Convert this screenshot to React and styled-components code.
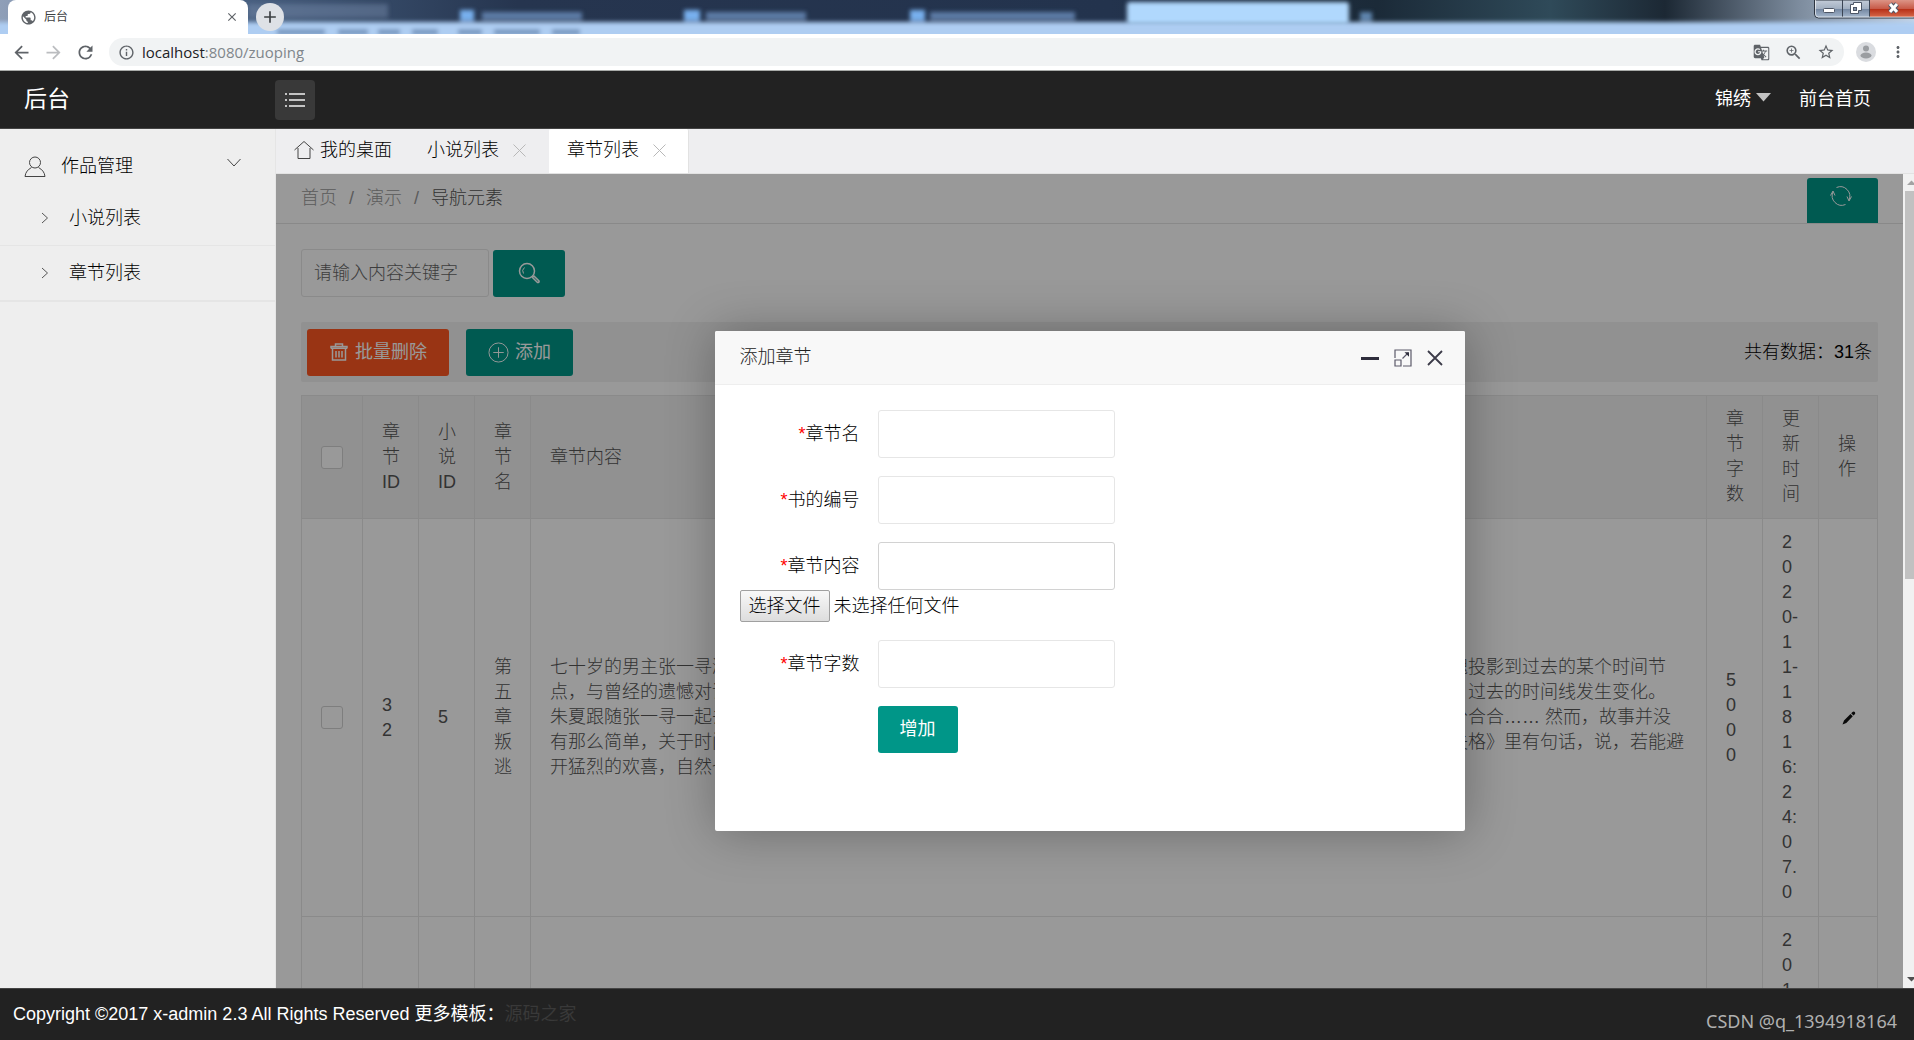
import React, { useRef, useState } from "react";
import styled, { createGlobalStyle } from "styled-components";
import {
  MdAdd,
  MdArrowBack,
  MdArrowForward,
  MdClose,
  MdGTranslate,
  MdInfoOutline,
  MdMoreVert,
  MdPublic,
  MdRefresh,
  MdStarOutline,
  MdZoomIn,
} from "react-icons/md";

const sideLinks = ["小说列表", "章节列表"];

const columns = [
  { title: "章节ID", width: 56 },
  { title: "小说ID", width: 56 },
  { title: "章节名", width: 56 },
  { title: "章节内容" },
  { title: "章节字数", width: 56 },
  { title: "更新时间", width: 56 },
  { title: "操作", width: 59 },
];

const chapters = [
  {
    id: "32",
    novel: "5",
    name: "第五章叛逃",
    content: [
      "七十岁的男主张一寻濒临死亡之际，得到了一次特殊的机会，借助神秘的时光机器，他可以将自己年老而孤独的灵魂投影到过去的某个时间节",
      "点，与曾经的遗憾对话。他一次又一次回到年少的时候，想要弥补当年的过错，却没有想到随着他每一次悄悄介入，过去的时间线发生变化。",
      "朱夏跟随张一寻一起去往过去的时空，两个人在漫长的岁月里相识相知，彼此扶持，一同经历了少年时代的种种分分合合…… 然而，故事并没",
      "有那么简单，关于时间的秘密正在一点点被揭开，所有人的命运也都因此悄然改变。太宰治在他的著名小说《人间失格》里有句话，说，若能避",
      "开猛烈的欢喜，自然也就不会有悲痛的来临。",
    ],
    words: "5000",
    time: "2020-11-18 16:24:07.0",
  },
  {
    id: "31",
    novel: "5",
    name: "第四章",
    content: ["时间的河流从来不会为谁停留。"],
    words: "5000",
    time: "2019-11-18 16:20:31.0",
  },
];

const App = () => {
  const [active, setActive] = useState("章节列表");
  return (
    <>
      <GlobalStyle />
      <Shell>
        <Browser />
        <Header />
        <Middle>
          <Sidebar />
          <Content>
            <Tabs>
              <Tab type="button" onClick={() => setActive("我的桌面")}>
                <HomeIcon />
                我的桌面
              </Tab>
              {sideLinks.map((name) => (
                <Tab
                  key={name}
                  type="button"
                  $closable
                  $active={active === name}
                  onClick={() => setActive(name)}
                >
                  {name}
                  <CrossIcon />
                </Tab>
              ))}
            </Tabs>
            <Frame>
              <Page>
                <ChapterPage />
                <Shade>
                  <AddDialog />
                </Shade>
              </Page>
              <ScrollBar>
                <Track>
                  <Arrow viewBox="0 0 17 17">
                    <path d="M4 11h9L8.500 6.500z" fill="#a3a3a3" />
                  </Arrow>
                  <Thumb />
                  <Arrow viewBox="0 0 17 17">
                    <path d="M4 6h9l-4.500 4.500z" fill="#505050" />
                  </Arrow>
                </Track>
              </ScrollBar>
            </Frame>
          </Content>
        </Middle>
        <Footer>
          <p>
            Copyright ©2017 x-admin 2.3 All Rights Reserved 更多模板：
            <a href="#source">源码之家</a>
          </p>
          <Watermark>CSDN @q_1394918164</Watermark>
        </Footer>
      </Shell>
    </>
  );
};

const Browser = () => (
  <div>
    <TitleBar>
      <Glass viewBox="0 0 1914 34" preserveAspectRatio="none" aria-hidden="true">
        <defs>
          <linearGradient id="sky" x1="0" x2="1" y1="0" y2="0">
            <stop offset="0" stopColor="#8f9fb8" />
            <stop offset="0.12" stopColor="#4a6283" />
            <stop offset="0.2" stopColor="#344865" />
            <stop offset="0.27" stopColor="#26354f" />
            <stop offset="0.58" stopColor="#23334d" />
            <stop offset="0.72" stopColor="#1b2a38" />
            <stop offset="0.81" stopColor="#2f4a59" />
            <stop offset="0.87" stopColor="#1c2834" />
            <stop offset="0.94" stopColor="#7d8c9e" />
            <stop offset="1" stopColor="#c4d4e6" />
          </linearGradient>
          <filter id="soft" x="-10%" y="-50%" width="120%" height="200%">
            <feGaussianBlur stdDeviation="2" />
          </filter>
        </defs>
        <rect width="1914" height="34" fill="url(#sky)" />
        <g filter="url(#soft)">
          <rect x="-20" y="22" width="1960" height="30" fill="#aecdf2" />
          <rect x="248" y="4" width="140" height="14" fill="#7186a5" opacity="0.5" />
          <rect x="460" y="10" width="14" height="11" fill="#78b0ee" />
          <rect x="482" y="12" width="100" height="8" fill="#5d7ba6" />
          <rect x="684" y="10" width="16" height="11" fill="#78b0ee" />
          <rect x="706" y="12" width="100" height="8" fill="#5d7ba6" />
          <rect x="910" y="10" width="15" height="11" fill="#78b0ee" />
          <rect x="930" y="12" width="145" height="8" fill="#5d7ba6" />
          <rect x="1360" y="12" width="12" height="9" fill="#5f85ad" />
          <path
            d="M277 32h48M338 32h30M378 32h22M412 32h26M458 32h24M494 32h46M552 32h28"
            stroke="#6f8fb8"
            strokeWidth="5"
          />
        </g>
        <rect x="1127" y="2" width="222" height="22" rx="3" fill="#b0d8fd" filter="url(#soft)" />
      </Glass>
      <BrowserTab>
        <MdPublic size={17} color="#5f6368" />
        <span>后台</span>
        <MdClose size={14} color="#5f6368" />
      </BrowserTab>
      <NewTab type="button" aria-label="新标签页">
        <MdAdd size={20} />
      </NewTab>
      <WindowButtons viewBox="0 0 100 19" aria-hidden="true">
        <defs>
          <linearGradient id="steel" x1="0" x2="0" y1="0" y2="1">
            <stop offset="0" stopColor="#c3ccd8" />
            <stop offset="0.5" stopColor="#a0aec0" />
            <stop offset="0.51" stopColor="#7588a2" />
            <stop offset="1" stopColor="#a9bbd0" />
          </linearGradient>
          <linearGradient id="red" x1="0" x2="0" y1="0" y2="1">
            <stop offset="0" stopColor="#dc9486" />
            <stop offset="0.5" stopColor="#c85b49" />
            <stop offset="0.51" stopColor="#b52c14" />
            <stop offset="1" stopColor="#d6684a" />
          </linearGradient>
        </defs>
        <path d="M.5 0v14q0 4 4 4H100V0z" fill="url(#steel)" stroke="#2c3440" />
        <path d="M56 0h44v17H56z" fill="url(#red)" />
        <path d="M28.500 0v17M55.500 0v17" stroke="#3b4554" />
        <path d="M1.500 0v14q0 3 3 3H100" fill="none" stroke="#fff" opacity="0.6" />
        <rect x="9.500" y="8.500" width="11" height="4" rx="1" fill="#fff" stroke="#4d5666" />
        <path d="M39.500 2.500h8v8h-3v3h-8v-9h3z" fill="#fff" stroke="#4d5666" />
        <rect x="39.500" y="7.500" width="3" height="3" fill="#8797ad" stroke="#4d5666" />
        <path d="M76 4l7 8M83 4l-7 8" stroke="#4d5666" strokeWidth="5" />
        <path d="M76 4l7 8M83 4l-7 8" stroke="#fff" strokeWidth="3" />
      </WindowButtons>
    </TitleBar>
    <AddressBar>
      <MdArrowBack size={21} />
      <MdArrowForward size={21} color="#bbbdc0" />
      <MdRefresh size={21} />
      <Omnibox>
        <MdInfoOutline size={17} />
        <Url>
          localhost<span>:8080/zuoping</span>
        </Url>
        <MdGTranslate size={17} />
        <MdZoomIn size={19} />
        <MdStarOutline size={18} />
      </Omnibox>
      <Avatar viewBox="0 0 20 20" aria-hidden="true">
        <circle cx="10" cy="10" r="10" fill="#dadce0" />
        <circle cx="10" cy="6.500" r="3" fill="#9a9da1" />
        <ellipse cx="10" cy="13.500" rx="5.500" ry="3" fill="#9a9da1" />
      </Avatar>
      <MdMoreVert size={18} />
    </AddressBar>
  </div>
);

const Header = () => (
  <TopBar>
    <Logo href="#home">后台</Logo>
    <Toggle type="button" aria-label="切换菜单">
      <svg width="22" height="16" viewBox="0 0 22 16" fill="none" stroke="#f2f2f2" strokeWidth="1.500">
        <path d="M5 2h16M5 8h16M5 14h16M1 2h2M1 8h2M1 14h2" />
      </svg>
    </Toggle>
    <TopLinks>
      <a href="#user">
        锦绣
        <svg width="15" height="9" viewBox="0 0 15 9">
          <path d="M0 0h15L7.500 8.500z" fill="#c2c2c2" />
        </svg>
      </a>
      <a href="#front">前台首页</a>
    </TopLinks>
  </TopBar>
);

const Sidebar = () => (
  <Side>
    <SideGroup type="button">
      <svg width="22" height="22" viewBox="0 0 22 22" fill="none" stroke="#444">
        <circle cx="11" cy="6.500" r="5.500" />
        <path d="M7.500 11.500C4 13.500 1.500 16 1 20.500h20c-.5-4.500-3-7-6.500-9" />
      </svg>
      <span>作品管理</span>
      <svg width="14" height="9" viewBox="0 0 14 9" fill="none" stroke="#444">
        <path d="M.5 1L7 8l6.500-7" />
      </svg>
    </SideGroup>
    <SideList>
      {sideLinks.map((name) => (
        <li key={name}>
          <a href={`#${name}`}>
            <svg width="8" height="12" viewBox="0 0 8 12" fill="none" stroke="#555">
              <path d="M1 1l5.500 5L1 11" />
            </svg>
            {name}
          </a>
        </li>
      ))}
    </SideList>
  </Side>
);

const ChapterPage = () => (
  <>
    <Crumbs>
      <nav>
        <a href="#index">首页</a>
        <i>/</i>
        <a href="#demo">演示</a>
        <i>/</i>
        <b>导航元素</b>
      </nav>
      <RefreshButton type="button" aria-label="刷新">
        <svg width="22" height="22" viewBox="0 0 22 22" fill="none" stroke="#fff">
          <path d="M6.500 2.500A9.500 9.500 0 0 1 19 15M15.500 19.500A9.500 9.500 0 0 1 3 7" />
          <path d="M21.500 11.500L19 16l-2-4.500M.5 10.500L3 6l2 4.500" />
        </svg>
      </RefreshButton>
    </Crumbs>
    <Body>
      <SearchRow onSubmit={(e) => e.preventDefault()}>
        <SearchInput aria-label="关键字" placeholder="请输入内容关键字" />
        <Button aria-label="搜索">
          <svg width="22" height="22" viewBox="0 0 22 22" fill="none" stroke="#fff" strokeWidth="1.500">
            <circle cx="9" cy="9" r="7.500" />
            <path d="M5.500 11.500a4.500 4.500 0 0 1 1-6" strokeWidth="1" />
            <path d="M14.500 15.500l1.500-1.500 5 5q.5 1.500-1.500 1.500z" />
          </svg>
        </Button>
      </SearchRow>
      <Actions>
        <Button type="button" $danger>
          <svg width="20" height="18" viewBox="0 0 20 18" fill="none" stroke="#fff" strokeWidth="1.500">
            <path d="M2 5.500V3.500h16v2M6.500 3V1h7v2M3.500 5v12h13V5M2 5.200h16M7 8v6.500M10 8v6.500M13 8v6.500" />
          </svg>
          批量删除
        </Button>
        <Button type="button">
          <svg width="21" height="21" viewBox="0 0 22 22" fill="none" stroke="#fff">
            <circle cx="11" cy="11" r="10" />
            <path d="M11 5.500v11M5.500 11h11" />
          </svg>
          添加
        </Button>
        <Total>共有数据：31条</Total>
      </Actions>
      <Table>
        <colgroup>
          <col width="61" />
          {columns.map((c) => (
            <col key={c.title} width={c.width} />
          ))}
        </colgroup>
        <thead>
          <tr>
            <th>
              <Check type="checkbox" aria-label="全选" />
            </th>
            {columns.map((c) => (
              <th key={c.title}>{c.title}</th>
            ))}
          </tr>
        </thead>
        <tbody>
          {chapters.map((row) => (
            <tr key={row.id}>
              <td>
                <Check type="checkbox" aria-label={row.name} />
              </td>
              <td>{row.id}</td>
              <td>{row.novel}</td>
              <td>{row.name}</td>
              <td>
                {row.content.map((line) => (
                  <Line key={line}>{line}</Line>
                ))}
              </td>
              <td>{row.words}</td>
              <td>{row.time}</td>
              <td>
                <EditButton type="button" aria-label="编辑">
                  <svg width="14" height="14" viewBox="0 0 14 14" fill="#111">
                    <path d="M.5 13.500l1.500-4 6.500-6.500 2.300 2.300L4.300 12zM9.200 2.300l1.300-1.300q1.200-1 2.300 0 1 1.200 0 2.300l-1.300 1.300z" />
                  </svg>
                </EditButton>
              </td>
            </tr>
          ))}
        </tbody>
      </Table>
    </Body>
  </>
);

const AddDialog = () => {
  const file = useRef(null);
  return (
    <Dialog role="dialog" aria-label="添加章节">
      <DialogTitle>
        <h2>添加章节</h2>
        <button type="button" aria-label="最小化">
          <svg width="18" height="18" viewBox="0 0 18 18">
            <path d="M0 8h18v3H0z" fill="#2e2d3c" />
          </svg>
        </button>
        <button type="button" aria-label="最大化">
          <svg width="18" height="18" viewBox="0 0 18 18" fill="none" stroke="#5c5a6a" strokeWidth="1.200">
            <path d="M1 9V1h16v16H9M1 11h6v6H1zM8.500 9.500L14 4" />
            <path d="M10.500 3.200H15v4.500z" fill="#2e2d3c" stroke="none" />
          </svg>
        </button>
        <button type="button" aria-label="关闭">
          <svg width="16" height="16" viewBox="0 0 16 16" fill="none" stroke="#3c3b49" strokeWidth="1.800">
            <path d="M1 1l14 14M15 1L1 15" />
          </svg>
        </button>
      </DialogTitle>
      <Form onSubmit={(e) => e.preventDefault()}>
        <Field id="name" label="章节名" />
        <Field id="book" label="书的编号" />
        <div>
          <Field id="content" label="章节内容" focused />
          <FileRow>
            <button type="button" onClick={() => file.current.click()}>
              选择文件
            </button>
            <span>未选择任何文件</span>
            <input ref={file} type="file" hidden />
          </FileRow>
        </div>
        <Field id="words" label="章节字数" />
        <Submit>增加</Submit>
      </Form>
    </Dialog>
  );
};

const Field = ({ id, label, focused }) => (
  <FormItem>
    <label htmlFor={id}>
      <em>*</em>
      {label}
    </label>
    <TextInput id={id} $focused={focused} />
  </FormItem>
);

const HomeIcon = () => (
  <svg width="20" height="20" viewBox="0 0 20 20" fill="none" stroke="#444">
    <path d="M.5 10L10 1.500l9.500 8.500M4 8v10.500h12V8" />
  </svg>
);

const CrossIcon = () => (
  <svg width="13" height="13" viewBox="0 0 13 13" fill="none" stroke="#b8b8b8">
    <path d="M.5.5l12 12M12.500.5l-12 12" />
  </svg>
);

const GlobalStyle = createGlobalStyle`
  * {
    margin: 0;
    padding: 0;
    box-sizing: border-box;
  }
  body, button, input {
    font-family: "Liberation Sans", "Noto Sans CJK SC", sans-serif;
    font-size: 18px;
    font-weight: 300;
    line-height: 25px;
  }
  body {
    overflow: hidden;
    color: #000;
  }
  a {
    color: inherit;
    text-decoration: none;
  }
  button {
    border: none;
    background: none;
    cursor: pointer;
  }
  svg {
    display: block;
    flex: none;
  }
  ul {
    list-style: none;
  }
`;

const Shell = styled.div`
  display: flex;
  flex-direction: column;
  height: 100vh;
`;

const TitleBar = styled.div`
  position: relative;
  display: flex;
  align-items: flex-end;
  height: 34px;
  padding-left: 8px;
`;

const Glass = styled.svg`
  position: absolute;
  inset: 0;
  width: 100%;
  height: 100%;
`;

const BrowserTab = styled.div`
  position: relative;
  display: flex;
  align-items: center;
  gap: 7px;
  width: 240px;
  height: 34px;
  padding: 0 9px 0 12px;
  background: #fff;
  border-radius: 8px 8px 0 0;
  span {
    flex: 1;
    font-size: 12px;
    font-weight: 400;
    color: #3c4043;
  }
`;

const NewTab = styled.button`
  position: relative;
  display: flex;
  align-items: center;
  justify-content: center;
  align-self: center;
  width: 28px;
  height: 28px;
  margin-left: 8px;
  border-radius: 50%;
  background: #dee1e6;
  color: #3c4043;
`;

const WindowButtons = styled.svg`
  position: absolute;
  top: 0;
  right: 0;
  width: 100px;
  height: 19px;
`;

const AddressBar = styled.div`
  display: flex;
  align-items: center;
  gap: 11px;
  height: 37px;
  padding: 0 7px 0 11px;
  background: #fff;
  border-bottom: 1px solid #a9aba9;
  color: #5f6368;
`;

const Omnibox = styled.div`
  display: flex;
  flex: 1;
  align-items: center;
  gap: 14px;
  height: 28px;
  margin: 0 1px 0 2px;
  padding: 0 9px;
  border-radius: 14px;
  background: #f1f3f4;
`;

const Url = styled.span`
  flex: 1;
  margin-left: -7px;
  font-family: "Open Sans", sans-serif;
  font-size: 15px;
  font-weight: 400;
  color: #202124;
  span {
    color: #80868b;
  }
`;

const Avatar = styled.svg`
  width: 20px;
  height: 20px;
  margin-right: 2px;
`;

const TopBar = styled.header`
  display: flex;
  align-items: center;
  height: 58px;
  padding: 0 43px 0 24px;
  background: #222;
  border-bottom: 1px solid #444;
  color: #fff;
  font-weight: 400;
`;

const Logo = styled.a`
  width: 251px;
  font-size: 23px;
`;

const Toggle = styled.button`
  display: flex;
  align-items: center;
  justify-content: center;
  width: 40px;
  height: 40px;
  border-radius: 4px;
  background: #393939;
`;

const TopLinks = styled.nav`
  display: flex;
  gap: 28px;
  margin-left: auto;
  a {
    display: flex;
    gap: 5px;
  }
  svg {
    margin-top: 6px;
  }
`;

const Middle = styled.div`
  display: flex;
  flex: 1;
  min-height: 0;
`;

const Side = styled.aside`
  width: 276px;
  background: #eee;
  border-right: 1px solid #e5e5e5;
  color: #000;
`;

const SideGroup = styled.button`
  display: flex;
  align-items: center;
  width: 100%;
  height: 62px;
  padding: 13px 34px 0 24px;
  color: #000;
  span {
    flex: 1;
    margin-left: 15px;
    text-align: left;
  }
  svg:last-child {
    margin-bottom: 9px;
  }
`;

const SideList = styled.ul`
  border-bottom: 1px solid #e5e5e5;
  a {
    display: flex;
    align-items: center;
    gap: 20px;
    height: 55px;
    padding-left: 41px;
    border-bottom: 1px solid #e5e5e5;
  }
`;

const Content = styled.main`
  display: flex;
  flex: 1;
  flex-direction: column;
  min-width: 0;
`;

const Tabs = styled.div`
  display: flex;
  height: 45px;
  background: #eeeef0;
  border-bottom: 1px solid #e2e2e2;
`;

const Tab = styled.button`
  display: flex;
  align-items: center;
  gap: ${(props) => (props.$closable ? 14 : 6)}px;
  padding: 0 ${(props) => (props.$closable ? 22 : 16)}px 2px 18px;
  background: ${(props) => (props.$active ? "#fff" : "transparent")};
  border-right: 1px solid ${(props) => (props.$active ? "#e2e2e2" : "transparent")};
  border-radius: 2px 2px 0 0;
`;

const Frame = styled.div`
  display: flex;
  flex: 1;
  min-height: 0;
`;

const Page = styled.div`
  position: relative;
  flex: 1;
  min-width: 0;
  overflow: hidden;
  background: #fff;
`;

const ScrollBar = styled.div`
  width: 11px;
  overflow: hidden;
  background: #f1f1f1;
`;

const Track = styled.div`
  display: flex;
  flex-direction: column;
  width: 17px;
  height: 100%;
`;

const Arrow = styled.svg`
  width: 17px;
  height: 17px;
`;

const Thumb = styled.div`
  height: 388px;
  margin: 0 2px auto;
  background: #c1c1c1;
`;

const Crumbs = styled.div`
  display: flex;
  align-items: flex-end;
  justify-content: space-between;
  height: 50px;
  padding: 0 25px;
  border-bottom: 1px solid #e5e5e5;
  color: #999;
  nav {
    align-self: center;
  }
  i {
    padding: 0 12px;
    font-style: normal;
  }
  b {
    font-weight: inherit;
    color: #555;
  }
`;

const RefreshButton = styled.button`
  display: flex;
  justify-content: center;
  width: 71px;
  height: 45px;
  padding: 7px 4px 0 0;
  border-radius: 3px 3px 0 0;
  background: #009688;
`;

const Body = styled.div`
  padding: 25px;
`;

const SearchRow = styled.form`
  display: flex;
  align-items: center;
  gap: 4px;
`;

const SearchInput = styled.input`
  width: 188px;
  height: 48px;
  padding: 0 12px;
  border: 1px solid #e6e6e6;
  border-radius: 3px;
  &::placeholder {
    color: #666;
  }
`;

const Button = styled.button`
  display: flex;
  align-items: center;
  justify-content: center;
  gap: 6px;
  min-width: 72px;
  height: 47px;
  padding: 0 22px;
  border-radius: 3px;
  background: ${(props) => (props.$danger ? "#ff5722" : "#009688")};
  color: #fff;
  font-weight: 400;
`;

const Submit = styled(Button)`
  width: 80px;
  margin-left: 138px;
`;

const Actions = styled.div`
  display: flex;
  align-items: center;
  gap: 17px;
  height: 60px;
  margin: 25px 0 13px;
  padding: 0 6px;
  border-radius: 2px;
  background: #f2f2f2;
`;

const Total = styled.span`
  margin-left: auto;
`;

const Table = styled.table`
  width: 100%;
  table-layout: fixed;
  border-collapse: collapse;
  color: #555;
  font-kerning: none;
  th, td {
    padding: 11px 17px 11px 19px;
    border: 1px solid #e6e6e6;
    font-weight: inherit;
    text-align: left;
    word-break: break-all;
  }
  thead {
    background: #f2f2f2;
  }
`;

const Line = styled.p`
  white-space: nowrap;
`;

const Check = styled.input`
  display: block;
  width: 22px;
  height: 23px;
  appearance: none;
  border: 1px solid #d2d2d2;
  border-radius: 3px;
  background: #fff;
`;

const EditButton = styled.button`
  display: block;
  padding-left: 4px;
`;

const Shade = styled.div`
  position: absolute;
  inset: 0;
  display: flex;
  align-items: center;
  justify-content: center;
  background: rgba(0, 0, 0, 0.4);
`;

const Dialog = styled.section`
  width: 750px;
  min-height: 500px;
  border-radius: 2px;
  background: #fff;
  box-shadow: 1px 1px 50px rgba(0, 0, 0, 0.3);
`;

const DialogTitle = styled.div`
  display: flex;
  align-items: center;
  gap: 15px;
  height: 54px;
  padding: 0 22px 0 25px;
  border-bottom: 1px solid #eee;
  border-radius: 2px 2px 0 0;
  background: #f8f8f8;
  h2 {
    flex: 1;
    font-size: 18px;
    font-weight: inherit;
    color: #222;
  }
`;

const Form = styled.form`
  display: flex;
  flex-direction: column;
  gap: 18px;
  padding: 25px;
`;

const FormItem = styled.div`
  display: flex;
  align-items: center;
  gap: 18px;
  label {
    width: 120px;
    text-align: right;
  }
  em {
    font-style: normal;
    color: red;
  }
`;

const TextInput = styled.input`
  width: 237px;
  height: 48px;
  padding: 0 13px;
  border: 1px solid ${(props) => (props.$focused ? "#d2d2d2" : "#e6e6e6")};
  border-radius: 3px;
`;

const FileRow = styled.div`
  display: flex;
  align-items: center;
  gap: 4px;
  button {
    height: 32px;
    padding: 0 8px;
    border: 1px solid #a0a0a0;
    border-radius: 2px;
    background: linear-gradient(#f8f8f8, #ddd);
  }
`;

const Footer = styled.footer`
  display: flex;
  align-items: center;
  justify-content: space-between;
  height: 52px;
  padding: 0 17px 0 13px;
  border-top: 1px solid #444;
  background: #222;
  color: #fff;
  font-weight: 400;
  a {
    color: #393939;
  }
`;

const Watermark = styled.span`
  padding-top: 14px;
  font-family: "Noto Sans", sans-serif;
  color: #b0b0b0;
`;

export default App;
